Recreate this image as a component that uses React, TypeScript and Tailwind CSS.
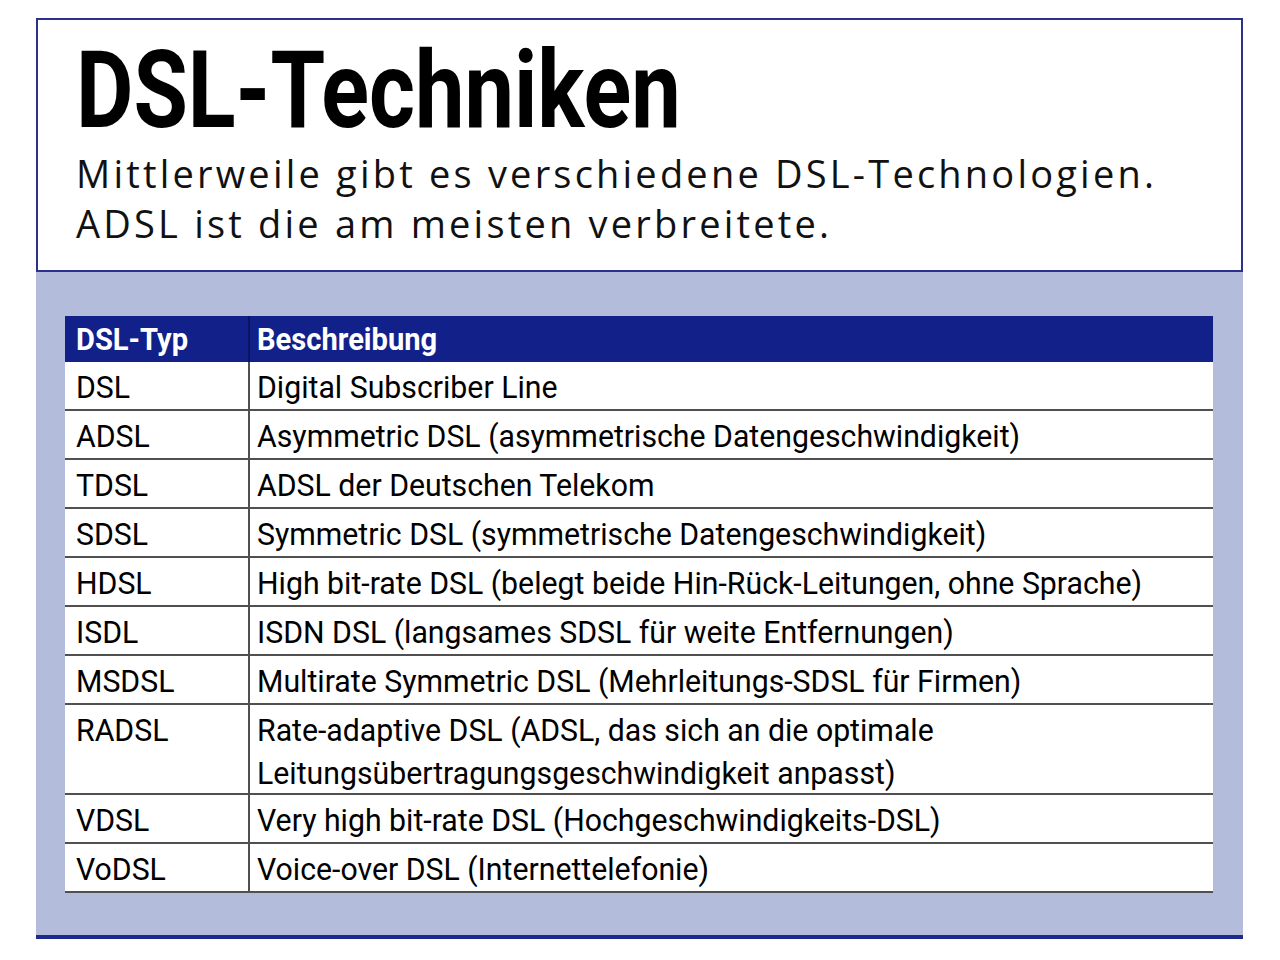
const rows: { typ: string; text: string[] }[] = [
  { typ: "DSL", text: ["Digital Subscriber Line"] },
  { typ: "ADSL", text: ["Asymmetric DSL (asymmetrische Datengeschwindigkeit)"] },
  { typ: "TDSL", text: ["ADSL der Deutschen Telekom"] },
  { typ: "SDSL", text: ["Symmetric DSL (symmetrische Datengeschwindigkeit)"] },
  { typ: "HDSL", text: ["High bit-rate DSL (belegt beide Hin-Rück-Leitungen, ohne Sprache)"] },
  { typ: "ISDL", text: ["ISDN DSL (langsames SDSL für weite Entfernungen)"] },
  { typ: "MSDSL", text: ["Multirate Symmetric DSL (Mehrleitungs-SDSL für Firmen)"] },
  {
    typ: "RADSL",
    text: ["Rate-adaptive DSL (ADSL, das sich an die optimale", "Leitungsübertragungsgeschwindigkeit anpasst)"],
  },
  { typ: "VDSL", text: ["Very high bit-rate DSL (Hochgeschwindigkeits-DSL)"] },
  { typ: "VoDSL", text: ["Voice-over DSL (Internettelefonie)"] },
];

const cond = "inline-block origin-left scale-x-[0.945] whitespace-nowrap";
const condHead = "inline-block origin-left scale-x-[0.91] whitespace-nowrap";

export default function App() {
  return (
    <div className="min-h-screen bg-white pt-[18px] pl-9">
      <div className="w-[1207px]">
        <div className="h-[254px] border-2 border-[#2e318c] pl-[38px] pt-4">
          <h1 className="font-['Roboto',sans-serif] text-[108px] leading-none font-bold text-black">
            <span className="inline-block origin-left scale-x-[0.818] whitespace-nowrap">DSL-Techniken</span>
          </h1>
          <p className="mt-1 font-['Open_Sans',sans-serif] text-[38px] leading-[50px] tracking-[3.2px] text-[#111]">
            Mittlerweile gibt es verschiedene DSL-Technologien.
            <br />
            ADSL ist die am meisten verbreitete.
          </p>
        </div>

        <div className="bg-[#b4bcdc] pt-[44px] pl-[29px] pr-[30px] pb-[42px] border-b-4 border-[#1b2a8c]">
          <div className="font-['Roboto',sans-serif] text-[32px] text-black">
            <div className="flex h-[46px] bg-[#12218a] text-white font-bold">
              <div className="w-[183px] flex items-center pl-[11px]">
                <span className={condHead}>DSL-Typ</span>
              </div>
              <div className="flex-1 flex items-center border-l-2 border-[#0a1460] pl-[7px]">
                <span className={condHead}>Beschreibung</span>
              </div>
            </div>
            {rows.map((r) => {
              const tall = r.text.length > 1;
              const align = tall ? "items-start pt-[4px]" : "items-center pt-[4px]";
              return (
                <div
                  key={r.typ}
                  className={`flex bg-white border-b-2 border-[#505050] leading-[43px] ${tall ? "h-[90px]" : "h-[49px]"}`}
                >
                  <div className={`w-[183px] flex pl-[11px] ${align}`}>
                    <span className={cond}>{r.typ}</span>
                  </div>
                  <div className={`flex-1 flex border-l-2 border-[#505050] pl-[7px] ${align}`}>
                    <span className={cond}>
                      {r.text.map((t, i) => (
                        <span key={i} className="block">
                          {t}
                        </span>
                      ))}
                    </span>
                  </div>
                </div>
              );
            })}
          </div>
        </div>
      </div>
    </div>
  );
}
